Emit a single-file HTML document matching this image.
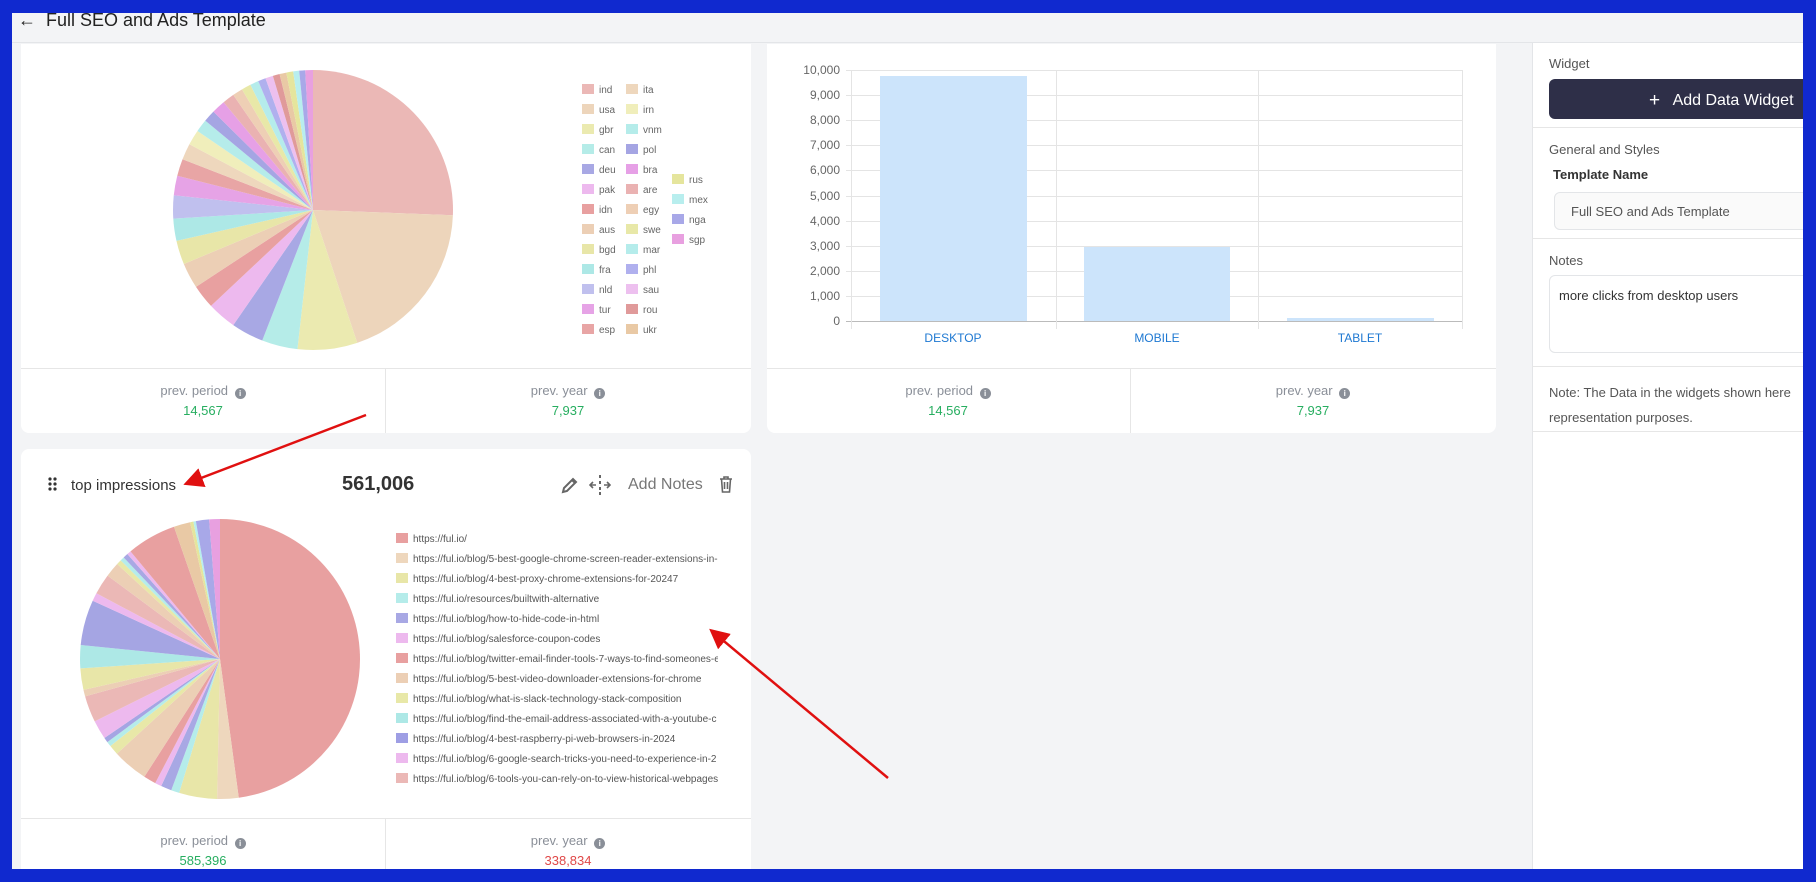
<!DOCTYPE html>
<html><head><meta charset="utf-8"><style>
*{box-sizing:border-box;margin:0;padding:0}
body{width:1816px;height:882px;background:#1029cf;position:relative;overflow:hidden;font-family:"Liberation Sans",sans-serif;color:#333}
#app{position:absolute;left:12px;top:13px;width:1791px;height:856px;background:#f3f4f6;overflow:hidden}
.abs{position:absolute}
.card{position:absolute;background:#fff;border-radius:8px}
.ft{position:absolute;font-size:13px;color:#8a8f98;text-align:center;width:200px}
.val{font-size:13px;text-align:center;width:200px;position:absolute}
.i{display:inline-block;width:11px;height:11px;border-radius:50%;background:#8a8f98;color:#fff;font-size:8px;line-height:11px;font-weight:bold;vertical-align:-1px;margin-left:3px}
.lg{position:absolute;font-size:10px;color:#666;white-space:nowrap}
.lg b{display:inline-block;width:12px;height:10px;vertical-align:-1px;margin-right:5px}
.yl{position:absolute;font-size:12px;color:#666;width:40px;text-align:right}
.gl{position:absolute;height:1px;background:#e4e4e4}
</style></head><body>
<div id="app">
<div class="abs" style="left:0;top:0;width:1791px;height:30px;background:#f3f4f6;border-bottom:1px solid #e3e5e8"></div>
<div class="abs" style="left:6px;top:-3px;font-size:18px;color:#222">&#8592; &nbsp;Full SEO and Ads Template</div>

<!-- card 1 -->
<div class="card" style="left:9px;top:31px;width:730px;height:389px;border-top-left-radius:0;border-top-right-radius:0"></div>
<svg class="abs" id="p1" style="left:0;top:0" width="760" height="440"></svg>
<div class="abs" style="left:9px;top:355px;width:730px;height:1px;background:#e6e6e6"></div>
<div class="abs" style="left:373px;top:355px;width:1px;height:65px;background:#e6e6e6"></div>
<div class="ft" style="left:91px;top:370px">prev. period <span class="i">i</span></div>
<div class="val" style="left:91px;top:390px;color:#27ae60">14,567</div>
<div class="ft" style="left:456px;top:370px">prev. year <span class="i">i</span></div>
<div class="val" style="left:456px;top:390px;color:#27ae60">7,937</div>
<div id="lg1"></div>

<!-- card 2 -->
<div class="card" style="left:755px;top:31px;width:729px;height:389px;border-top-left-radius:0;border-top-right-radius:0"></div>
<div id="bar"></div>
<div class="abs" style="left:755px;top:355px;width:729px;height:1px;background:#e6e6e6"></div>
<div class="abs" style="left:1118px;top:355px;width:1px;height:65px;background:#e6e6e6"></div>
<div class="ft" style="left:836px;top:370px">prev. period <span class="i">i</span></div>
<div class="val" style="left:836px;top:390px;color:#27ae60">14,567</div>
<div class="ft" style="left:1201px;top:370px">prev. year <span class="i">i</span></div>
<div class="val" style="left:1201px;top:390px;color:#27ae60">7,937</div>

<!-- right panel -->
<div class="abs" style="left:1520px;top:30px;width:271px;height:826px;background:#fff;border-left:1px solid #e3e5e8"></div>
<div class="abs" style="left:1537px;top:43px;font-size:13px;color:#555">Widget</div>
<div class="abs" style="left:1537px;top:66px;width:260px;height:40px;background:#2e2f48;border-radius:6px;color:#fff;font-size:16px;padding:10px 0 0 100px"><span style="font-size:19px;position:relative;top:1px">+</span>&nbsp;&nbsp; Add Data Widget</div>
<div class="abs" style="left:1520px;top:114px;width:271px;height:1px;background:#e6e6e6"></div>
<div class="abs" style="left:1537px;top:129px;font-size:13px;color:#555">General and Styles</div>
<div class="abs" style="left:1541px;top:154px;font-size:13px;color:#333;font-weight:bold">Template Name</div>
<div class="abs" style="left:1542px;top:179px;width:260px;height:38px;border:1px solid #e3e5e8;border-radius:6px;background:#fafafa;font-size:13px;color:#555;padding:11px 0 0 16px">Full SEO and Ads Template</div>
<div class="abs" style="left:1520px;top:225px;width:271px;height:1px;background:#e6e6e6"></div>
<div class="abs" style="left:1537px;top:240px;font-size:13px;color:#555">Notes</div>
<div class="abs" style="left:1537px;top:262px;width:260px;height:78px;border:1px solid #e3e5e8;border-radius:6px;font-size:13px;color:#333;padding:12px 0 0 9px">more clicks from desktop users</div>
<div class="abs" style="left:1520px;top:353px;width:271px;height:1px;background:#e6e6e6"></div>
<div class="abs" style="left:1537px;top:367px;font-size:13px;color:#555;line-height:25px;white-space:nowrap">Note: The Data in the widgets shown here<br>representation purposes.</div>
<div class="abs" style="left:1520px;top:418px;width:271px;height:1px;background:#e6e6e6"></div>

<!-- card 3 -->
<div class="card" style="left:9px;top:436px;width:730px;height:440px"></div>
<div class="abs" style="left:36px;top:464px;width:10px;height:14px">
<svg width="10" height="14"><g fill="#333"><circle cx="2" cy="2" r="1.6"/><circle cx="7" cy="2" r="1.6"/><circle cx="2" cy="7" r="1.6"/><circle cx="7" cy="7" r="1.6"/><circle cx="2" cy="12" r="1.6"/><circle cx="7" cy="12" r="1.6"/></g></svg></div>
<div class="abs" style="left:59px;top:464px;font-size:15px;color:#333">top impressions</div>
<div class="abs" style="left:330px;top:460px;font-size:20px;color:#333;font-weight:bold">561,006</div>
<svg class="abs" style="left:548px;top:462px" width="18" height="20" viewBox="0 0 18 20"><path d="M3 17 L4 13 L13 4 L16 7 L7 16 Z M12 5 L15 8" fill="none" stroke="#666" stroke-width="2"/></svg>
<svg class="abs" style="left:577px;top:461px" width="22" height="22" viewBox="0 0 22 22"><path d="M11 1v3M11 7v3M11 13v3M11 18v3" stroke="#666" stroke-width="2"/><path d="M2 11h5M15 11h5M4 8l-3 3 3 3M18 8l3 3-3 3" fill="none" stroke="#666" stroke-width="1.6"/></svg>
<div class="abs" style="left:616px;top:463px;font-size:16px;color:#777">Add Notes</div>
<svg class="abs" style="left:707px;top:462px" width="14" height="18" viewBox="0 0 14 18"><path d="M1 4h12M5 4V2h4v2M2.5 4l1 13h7l1-13M5.5 7v7M8.5 7v7" fill="none" stroke="#666" stroke-width="1.6"/></svg>
<svg class="abs" id="p2" style="left:0;top:0" width="760" height="860"></svg>
<div id="lg2"></div>
<div class="abs" style="left:9px;top:805px;width:730px;height:1px;background:#e6e6e6"></div>
<div class="abs" style="left:373px;top:805px;width:1px;height:60px;background:#e6e6e6"></div>
<div class="ft" style="left:91px;top:820px">prev. period <span class="i">i</span></div>
<div class="val" style="left:91px;top:840px;color:#27ae60">585,396</div>
<div class="ft" style="left:456px;top:820px">prev. year <span class="i">i</span></div>
<div class="val" style="left:456px;top:840px;color:#e04848">338,834</div>

<svg class="abs" style="left:0;top:0" width="1791" height="856">
<defs><marker id="ah" markerWidth="8" markerHeight="8" refX="6" refY="4" orient="auto"><path d="M0,0 L8,4 L0,8 Z" fill="#e01010"/></marker></defs>
<line x1="354" y1="402" x2="176" y2="470" stroke="#e01010" stroke-width="2.5" marker-end="url(#ah)"/>
<line x1="876" y1="765" x2="701" y2="619" stroke="#e01010" stroke-width="2.5" marker-end="url(#ah)"/>
</svg>
</div>
<script>
const C={ind:"#ebb8b6",usa:"#edd5bb",gbr:"#ebeab0",can:"#b5ece8",deu:"#a8a8e4",pak:"#edb9ee",idn:"#e8a0a0",aus:"#eccfb5",bgd:"#e8e6a8",fra:"#ade8e6",nld:"#c0c0ee",tur:"#e6a3e6",esp:"#e8a5a5",ita:"#eed7bd",irn:"#f0eebb",vnm:"#b5ecea",pol:"#a5a5e3",bra:"#e6a0e6",are:"#eab2b2",egy:"#eecfb5",swe:"#e8e8a8",mar:"#b5eceb",phl:"#b0b0ee",sau:"#edc0ef",rou:"#e09a9a",ukr:"#e9c9a5",rus:"#e5e59d",mex:"#b8eeee",nga:"#a8a8e8",sgp:"#e8a0e0"};
const ox=12,oy=13;
function pie(svg,cx,cy,r,vals,cols){let s=vals.reduce((a,b)=>a+b,0),a=-Math.PI/2,h="";
vals.forEach((v,i)=>{let b=a+v/s*2*Math.PI;let x1=cx+r*Math.cos(a),y1=cy+r*Math.sin(a),x2=cx+r*Math.cos(b),y2=cy+r*Math.sin(b);
h+=`<path d="M${cx},${cy}L${x1},${y1}A${r},${r} 0 ${b-a>Math.PI?1:0} 1 ${x2},${y2}Z" fill="${cols[i%cols.length]}"/>`;a=b;});
document.getElementById(svg).innerHTML=h;}
const k1=["ind","usa","gbr","can","deu","pak","idn","aus","bgd","fra","nld","tur","esp","ita","irn","vnm","pol","bra","are","egy","swe","mar","phl","sau","rou","ukr","rus","mex","nga","sgp"];
const v1=[26,19.6,7,4.2,3.8,3.4,2.8,3.0,2.8,2.6,2.7,2.3,2.0,1.9,1.8,1.5,1.4,1.6,1.4,1.2,1.1,1.0,0.9,0.9,0.8,0.8,0.8,0.7,0.7,0.9];
pie("p1",313-ox,210-oy,140,v1,k1.map(k=>C[k]));
let h="";const L1=[["ind","ita"],["usa","irn"],["gbr","vnm"],["can","pol"],["deu","bra"],["pak","are"],["idn","egy"],["aus","swe"],["bgd","mar"],["fra","phl"],["nld","sau"],["tur","rou"],["esp","ukr"]];
L1.forEach((r,i)=>{r.forEach((k,j)=>{h+=`<div class="lg" style="left:${582-ox+j*44}px;top:${84-oy+i*20}px"><b style="background:${C[k]}"></b>${k}</div>`})});
["rus","mex","nga","sgp"].forEach((k,i)=>{h+=`<div class="lg" style="left:${672-ox}px;top:${174-oy+i*20}px"><b style="background:${C[k]}"></b>${k}</div>`});
document.getElementById("lg1").innerHTML=h;
h="";const top0=70-oy,step=25.1;
for(let i=0;i<=10;i++){let y=top0+i*step;h+=`<div class="gl" style="left:${846-ox}px;top:${y}px;width:${616}px"></div>`;
let n=(10-i)*1000;h+=`<div class="yl" style="left:${800-ox}px;top:${y-7}px">${n.toLocaleString("en-US")}</div>`;}
h+=`<div class="gl" style="left:${846-ox}px;top:${top0+10*step}px;width:616px;background:#bbb"></div>`;
[851,1056,1258,1462].forEach(x=>{h+=`<div class="abs" style="left:${x-ox}px;top:${top0}px;width:1px;height:${10*step+8}px;background:#e4e4e4"></div>`});
[[880,1027,76],[1084,1230,247],[1287,1434,318]].forEach(b=>{h+=`<div class="abs" style="left:${b[0]-ox}px;top:${b[2]-oy}px;width:${b[1]-b[0]}px;height:${321-b[2]}px;background:#cce4fb"></div>`});
[["DESKTOP",953],["MOBILE",1157],["TABLET",1360]].forEach(l=>{h+=`<div class="abs" style="left:${l[1]-ox-50}px;width:100px;text-align:center;top:${331-oy}px;font-size:12px;color:#1e78d2">${l[0]}</div>`});
document.getElementById("bar").innerHTML=h;
const c2=["#e8a0a0","#eed7bd","#e8e6a8","#b5ecea","#a8a8e4","#edb9ee","#e8a0a0","#eccfb5","#e8e8a8","#b5ecea","#a5a5e3","#edb9ee","#ebb8b6","#eccfb5","#e8e6a8","#ade8e6","#a5a5e3","#edb9ee","#ebb8b6","#eccfb5","#e8e8a8","#b5ecea","#a8a8e4","#edb9ee","#e8a0a0","#e9c9a5","#e5e59d","#b8eeee","#a8a8e8","#e8a0e0"];
const v2=[50.3,2.6,4.6,1.0,1.3,0.8,1.5,4.3,1.2,0.6,0.6,2.3,3.2,0.8,2.6,2.8,5.5,1.0,2.5,1.8,0.6,0.5,0.6,0.5,6.0,2.0,0.4,0.3,1.6,1.3];
pie("p2",220-ox,659-oy,140,v2,c2);
const u=["https://ful.io/","https://ful.io/blog/5-best-google-chrome-screen-reader-extensions-in-","https://ful.io/blog/4-best-proxy-chrome-extensions-for-20247","https://ful.io/resources/builtwith-alternative","https://ful.io/blog/how-to-hide-code-in-html","https://ful.io/blog/salesforce-coupon-codes","https://ful.io/blog/twitter-email-finder-tools-7-ways-to-find-someones-e","https://ful.io/blog/5-best-video-downloader-extensions-for-chrome","https://ful.io/blog/what-is-slack-technology-stack-composition","https://ful.io/blog/find-the-email-address-associated-with-a-youtube-c","https://ful.io/blog/4-best-raspberry-pi-web-browsers-in-2024","https://ful.io/blog/6-google-search-tricks-you-need-to-experience-in-2","https://ful.io/blog/6-tools-you-can-rely-on-to-view-historical-webpages"];
const uc=["#e8a0a0","#eed7bd","#e8e6a8","#b5ecea","#a8a8e4","#edb9ee","#e8a0a0","#eccfb5","#e8e8a8","#ade8e6","#9e9ee4","#edb9ee","#ebb8b6"];
h="";u.forEach((t,i)=>{h+=`<div class="lg" style="left:${396-ox}px;top:${533-oy+i*20}px;width:${322}px;overflow:hidden;color:#555;font-size:10px"><b style="background:${uc[i]}"></b>${t}</div>`});
document.getElementById("lg2").innerHTML=h;
</script>
</body></html>
